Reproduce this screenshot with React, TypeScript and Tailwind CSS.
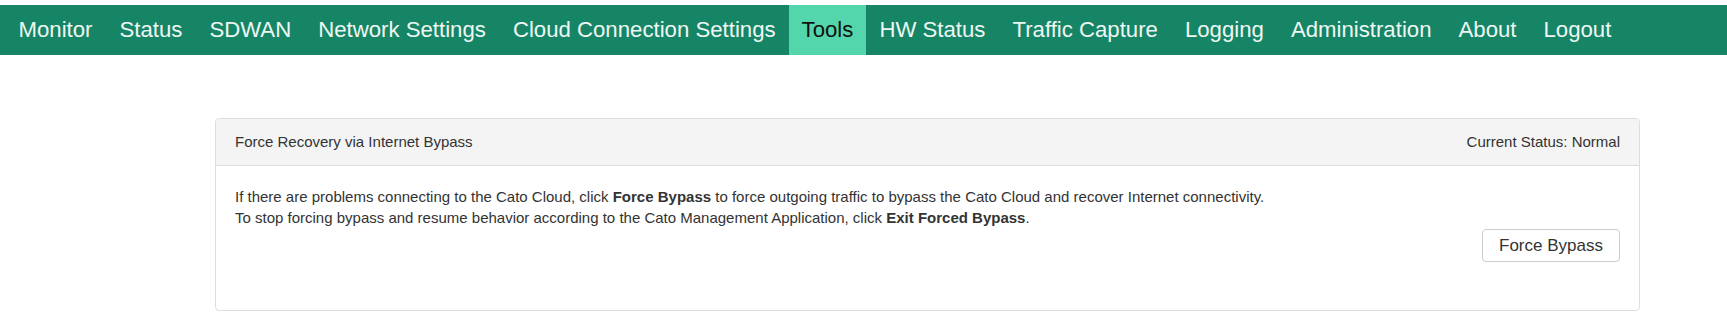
import React from "react";

const navItems = [
  "Monitor",
  "Status",
  "SDWAN",
  "Network Settings",
  "Cloud Connection Settings",
  "Tools",
  "HW Status",
  "Traffic Capture",
  "Logging",
  "Administration",
  "About",
  "Logout",
];

const NavBar: React.FC<{ active: string }> = ({ active }) => (
  <nav className="mt-[5px] flex h-[50px] bg-[#168565] pl-[5px] text-[22.2px] leading-[50px]">
    {navItems.map((item) => (
      <a
        key={item}
        href="#"
        className={
          item === active
            ? "whitespace-nowrap bg-[#54d6ac] px-[12.5px] text-[#111]"
            : "whitespace-nowrap px-[13.5px] text-[#eef7f3]"
        }
      >
        {item}
      </a>
    ))}
  </nav>
);

const BypassPanel: React.FC = () => (
  <div className="ml-[215px] mt-[63px] w-[1425px] rounded-[4px] border border-[#dddddd] text-[#333333]">
    <div className="flex h-[47px] items-center justify-between rounded-t-[4px] border-b border-[#dddddd] bg-[#f4f4f4] px-[19px] text-[15px]">
      <span>Force Recovery via Internet Bypass</span>
      <span>Current Status: Normal</span>
    </div>
    <div className="flex flex-col px-[19px] pb-[48px] pt-[20px] text-[15px] leading-[21px]">
      <p>
        If there are problems connecting to the Cato Cloud, click{" "}
        <b>Force Bypass</b> to force outgoing traffic to bypass the Cato Cloud
        and recover Internet connectivity.
      </p>
      <p>
        To stop forcing bypass and resume behavior according to the Cato
        Management Application, click <b>Exit Forced Bypass</b>.
      </p>
      <button className="ml-auto mt-[1px] h-[33px] w-[138px] rounded-[4px] border border-[#cccccc] bg-white text-[17px] text-[#333333]">
        Force Bypass
      </button>
    </div>
  </div>
);

export default function App() {
  return (
    <div className="h-[323px] w-[1727px] overflow-hidden bg-white font-['Liberation_Sans',Arial,sans-serif]">
      <NavBar active="Tools" />
      <BypassPanel />
    </div>
  );
}
